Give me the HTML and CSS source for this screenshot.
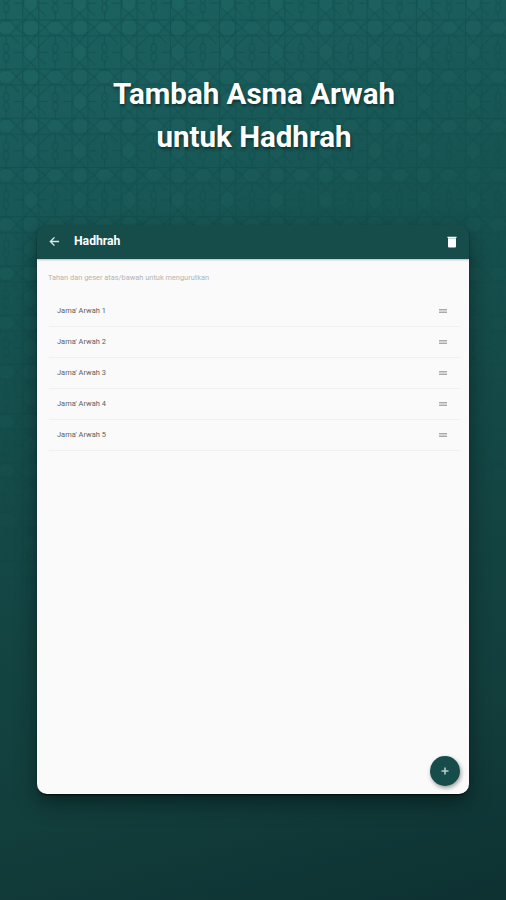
FILE: index.html
```html
<!DOCTYPE html>
<html lang="id">
<head>
<meta charset="utf-8">
<title>Hadhrah</title>
<link rel="stylesheet" href="styles.css">
</head>
<body>
<svg class="pattern" width="506" height="600" aria-hidden="true">
  <defs>
    <pattern id="tile" x="22.3" y="19.4" width="49.2" height="49.2" patternUnits="userSpaceOnUse">
      <g fill="#3b8783" fill-opacity=".1">
        <path d="M5 1.5H12L15.5 5V11.5L12 15H5L1.5 11.5V5Z"/>
        <path d="M23 8.2 29 1.6H37L43 8.2 37 15H29Z"/>
        <path d="M8.2 23 15 29V37L8.2 43 1.6 37V29Z"/>
      </g>
      <g fill="none" stroke="#0b4443" stroke-opacity=".46" stroke-width="1">
        <path d="M0 .5H49.2M0 16.5H49.2M.5 0V49.2M16.5 0V49.2"/>
        <path d="M23 8.2 29 1.6H37L43 8.2 37 15H29ZM8.2 23 15 29V37L8.2 43 1.6 37V29Z"/>
        <path d="M12 0 23 8.2 12 16.5M4 16.5 0 12M0 4 4 0M0 12 8.2 23 16.5 12M43 8.2 49.2 2M43 8.2 49.2 14M8.2 43 2 49.2M8.2 43 14 49.2"/>
        <path d="M15 29 24 20M15 37 24 46M29 15 20 24M37 15 46 24"/>
        <path d="M33 16.5V25M33 41V49.2M16.5 33H25M41 33H49.2"/>
        <ellipse cx="33" cy="28.5" rx="2.6" ry="4.5"/><ellipse cx="33" cy="38" rx="2.6" ry="4.5"/>
      </g>
    </pattern>
  </defs>
  <rect width="506" height="600" fill="url(#tile)"/>
</svg>
<main class="page">
  <h1 class="headline">Tambah Asma Arwah<br>untuk Hadhrah</h1>
  <section class="screen">
    <header class="bar">
      <svg class="back" viewBox="0 0 12 12"><path d="M11 6H1.8M6 1.5 1.5 6 6 10.5"/></svg>
      <h2 class="title">Hadhrah</h2>
      <svg class="trash" viewBox="0 0 10 12"><path d="M.5 .8H9.5V2H.5ZM1 2.3H9V10.5Q9 11.5 8 11.5H2Q1 11.5 1 10.5Z"/></svg>
    </header>
    <p class="hint">Tahan dan geser atas/bawah untuk mengurutkan</p>
    <ul class="list">
      <li class="item"><span>Jama' Arwah 1</span><i class="handle"></i></li>
      <li class="item"><span>Jama' Arwah 2</span><i class="handle"></i></li>
      <li class="item"><span>Jama' Arwah 3</span><i class="handle"></i></li>
      <li class="item"><span>Jama' Arwah 4</span><i class="handle"></i></li>
      <li class="item"><span>Jama' Arwah 5</span><i class="handle"></i></li>
    </ul>
    <button class="fab" aria-label="Tambah"><svg viewBox="0 0 8 8"><path d="M4 .5V7.5M.5 4H7.5"/></svg></button>
  </section>
</main>
</body>
</html>
```

FILE: styles.css
```css
* { box-sizing: border-box; margin: 0; padding: 0; }

body {
  position: relative;
  height: 900px;
  overflow: hidden;
  font-family: Roboto, "Liberation Sans", sans-serif;
  background: linear-gradient(165deg, #1b625e 0%, #1a5d5c 12%, #165452 28%, #144947 50%, #123e3c 80%, #0e3132 100%) 0 0 / 100% 900px no-repeat;
}

.pattern {
  position: absolute;
  top: 0;
  left: 0;
  -webkit-mask-image: linear-gradient(155deg, #000 0%, rgba(0, 0, 0, .65) 38%, transparent 85%);
  mask-image: linear-gradient(155deg, #000 0%, rgba(0, 0, 0, .65) 38%, transparent 85%);
}

.page {
  position: relative;
  height: 900px;
  padding: 73px 37px 0;
}

.headline {
  height: 152px;
  padding-left: 2px;
  color: #fff;
  font-size: 29.5px;
  font-weight: 700;
  line-height: 43px;
  text-align: center;
  text-shadow: 1px 2px 3px rgba(0, 0, 0, .45);
}

.screen {
  position: relative;
  width: 432px;
  height: 569px;
  border-radius: 10px;
  background: linear-gradient(#164d4b 34px, #fafafa 34px);
  box-shadow: 0 2px 2px -1px rgba(0, 0, 0, .8), 0 9px 20px rgba(0, 18, 18, .55);
}

.bar {
  display: flex;
  align-items: center;
  height: 34px;
  padding: 0 12px 2px;
  border-radius: 10px 10px 0 0;
  background: #164d4b;
  box-shadow: 0 1px 2px rgba(0, 0, 0, .25);
}

.back {
  width: 11px;
  height: 11px;
  fill: none;
  stroke: #dce8e8;
  stroke-width: 1.5;
}

.title {
  flex: 1;
  margin-left: 14px;
  color: #fff;
  font-size: 12.2px;
  font-weight: 700;
  line-height: 16px;
}

.trash { width: 10px; height: 12px; margin-top: 1px; fill: #fff; }

.hint {
  padding: 13px 11px 0;
  color: #b4b4b4;
  font-size: 7.4px;
  line-height: 11px;
}

.list { margin: 13px 9px 0 12px; list-style: none; }

.item {
  display: flex;
  align-items: center;
  justify-content: space-between;
  height: 31px;
  padding: 0 13px 1px 8px;
  border-bottom: 1px solid #f0f0f0;
  color: #606060;
  font-size: 7.45px;
}

.handle {
  width: 8px;
  height: 4px;
  margin-top: 1px;
  border: solid #a9a9a9;
  border-width: 1px 0;
  background: #d4d4d4;
}

.fab {
  position: absolute;
  right: 9px;
  bottom: 8px;
  display: grid;
  place-items: center;
  width: 30px;
  height: 30px;
  border: 0;
  border-radius: 50%;
  background: #164d4a;
  box-shadow: 1px 2px 4px rgba(0, 0, 0, .4);
}

.fab svg { width: 8px; height: 8px; fill: none; stroke: #b4cccc; stroke-width: 1.6; }
```
